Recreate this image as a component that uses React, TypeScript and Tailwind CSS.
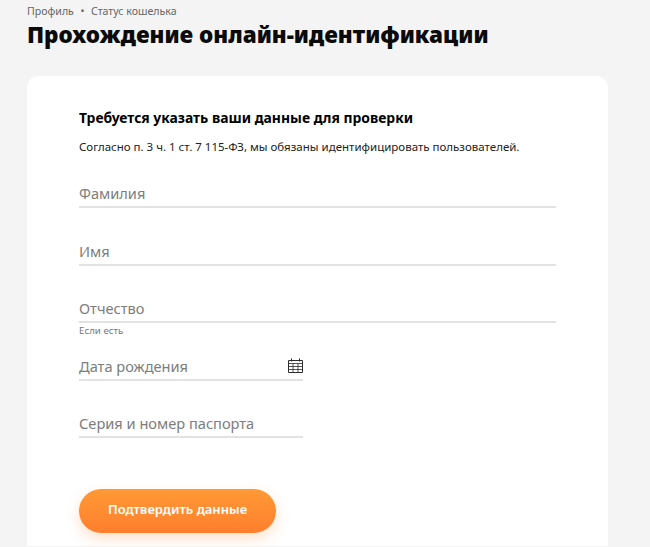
function CalendarIcon() {
  return (
    <svg width="15" height="15" viewBox="0 0 15 15" fill="none" stroke="#2b2b2b" strokeWidth="1">
      <path d="M.5 2.5h14v12H.5z" />
      <path d="M.5 5.5h14M.5 8.5h14M.5 11.5h14M5 5.5v9M10 5.5v9" strokeWidth="0.8" />
      <path d="M3.5 0.5v3M11.5 0.5v3" />
    </svg>
  );
}

function Field({ label, short, hint, icon }: { label: string; short?: boolean; hint?: string; icon?: boolean }) {
  return (
    <div className={short ? 'w-[224px]' : 'w-[477px]'}>
      <div className="flex h-[29px] items-center justify-between border-b-2 border-[#e2e2e2]">
        <span className="text-[14.6px] leading-[20px] text-[#7d7d7d]">{label}</span>
        {icon && <CalendarIcon />}
      </div>
      {hint && <p className="mt-[2px] text-[9.7px] leading-[12px] text-[#777]">{hint}</p>}
    </div>
  );
}

export default function App() {
  return (
    <div className="h-[547px] overflow-hidden bg-[#f4f4f4] pl-[27px] font-['Noto_Sans',sans-serif]">
      <div className="flex items-center gap-[6.5px] pt-[4px] text-[10.6px] leading-[14px] text-[#666]">
        <span>Профиль</span>
        <span>•</span>
        <span>Статус кошелька</span>
      </div>
      <h1 className="mt-[1px] text-[22.5px] font-black leading-[32px] text-[#0b0b0b]">
        Прохождение онлайн-идентификации
      </h1>
      <div className="mt-[25px] h-[470px] w-[581px] rounded-t-[12px] bg-white pl-[52px] pt-[32px]">
        <h2 className="text-[13.9px] font-bold leading-[20px] text-black">Требуется указать ваши данные для проверки</h2>
        <p className="mt-[11px] text-[11.5px] leading-[16px] text-[#222]">
          Согласно п. 3 ч. 1 ст. 7 115-ФЗ, мы обязаны идентифицировать пользователей.
        </p>
        <div className="mt-[24px] flex flex-col">
          <Field label="Фамилия" />
          <div className="mt-[29px]"><Field label="Имя" /></div>
          <div className="mt-[28px]"><Field label="Отчество" hint="Если есть" /></div>
          <div className="mt-[15px]"><Field label="Дата рождения" short icon /></div>
          <div className="mt-[28px]"><Field label="Серия и номер паспорта" short /></div>
        </div>
        <button className="mt-[51px] h-[44px] w-[197px] rounded-full bg-gradient-to-b from-[#ff9a35] to-[#ff7e2e] pb-[3px] text-[13px] font-semibold text-white shadow-[0_6px_14px_rgba(255,140,50,0.25)]">
          Подтвердить данные
        </button>
      </div>
    </div>
  );
}
